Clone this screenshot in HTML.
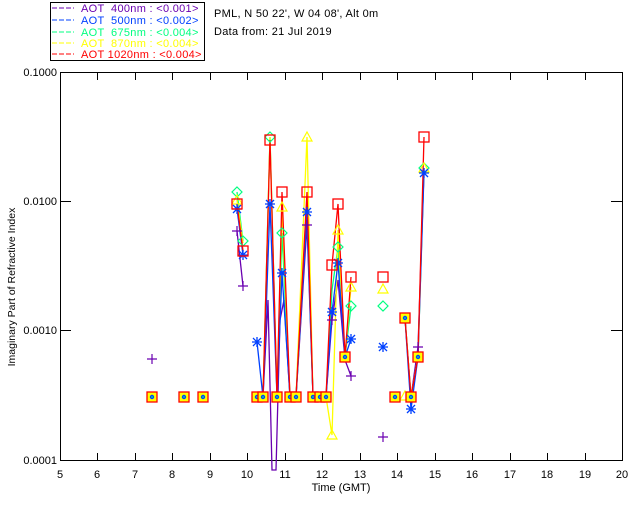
<!DOCTYPE html>
<html><head><meta charset="utf-8"><style>
html,body{margin:0;padding:0;background:#fff;}
svg{display:block;font-family:"Liberation Sans",sans-serif;}
</style></head><body>
<svg width="640" height="512" viewBox="0 0 640 512" xmlns="http://www.w3.org/2000/svg">
<defs>
<g id="sq"><rect x="-5" y="-5" width="10" height="10" fill="none" stroke="#f00" stroke-width="1.3"/></g>
<g id="sqf"><rect x="-5" y="-5" width="10" height="10" fill="#ff0" stroke="#f00" stroke-width="1.3"/><circle r="2.2" fill="#0040ff"/><circle r="0.9" fill="#00ff80"/></g>
<g id="tr"><path d="M0,-5 L5,4 L-5,4 Z" fill="none" stroke="#ff0" stroke-width="1.2"/></g>
<g id="di"><path d="M0,-5 L5,0 L0,5 L-5,0 Z" fill="none" stroke="#00ff80" stroke-width="1.2"/></g>
<g id="as" stroke="#0040ff" stroke-width="1.3"><path d="M-5,0H5M0,-5V5M-4,-4L4,4M-4,4L4,-4"/></g>
<g id="pl" stroke="#6a00b0" stroke-width="1.2"><path d="M-5,0H5M0,-5V5"/></g>
</defs>
<rect x="50.5" y="2.5" width="154" height="58" fill="#fff" stroke="#000" stroke-width="1"/>
<g font-size="11" letter-spacing="0.3">
<line x1="52" y1="8" x2="74" y2="8" stroke="#6a00b0" stroke-dasharray="5,2"/>
<text x="81" y="12" fill="#6a00b0" xml:space="preserve">AOT  400nm : &lt;0.001&gt;</text>
<line x1="52" y1="20" x2="74" y2="20" stroke="#0040ff" stroke-dasharray="5,2"/>
<text x="81" y="24" fill="#0040ff" xml:space="preserve">AOT  500nm : &lt;0.002&gt;</text>
<line x1="52" y1="32" x2="74" y2="32" stroke="#00ff80" stroke-dasharray="5,2"/>
<text x="81" y="36" fill="#00ff80" xml:space="preserve">AOT  675nm : &lt;0.004&gt;</text>
<line x1="52" y1="43" x2="74" y2="43" stroke="#ff0" stroke-dasharray="5,2"/>
<text x="81" y="47" fill="#ff0" xml:space="preserve">AOT  870nm : &lt;0.004&gt;</text>
<line x1="52" y1="54" x2="74" y2="54" stroke="#f00" stroke-dasharray="5,2"/>
<text x="81" y="58" fill="#f00" xml:space="preserve">AOT 1020nm : &lt;0.004&gt;</text>
<text x="214" y="17" fill="#000">PML, N 50 22', W 04 08', Alt 0m</text>
<text x="214" y="35" fill="#000">Data from: 21 Jul 2019</text>
</g>
<rect x="60.5" y="72.5" width="562" height="388" fill="none" stroke="#000" stroke-width="1"/>
<g stroke="#000" stroke-width="1">
<path d="M97.5,461V453M135.5,461V453M172.5,461V453M210.5,461V453M247.5,461V453M285.5,461V453M322.5,461V453M360.5,461V453M397.5,461V453M435.5,461V453M472.5,461V453M510.5,461V453M547.5,461V453M585.5,461V453"/>
<path d="M97.5,72V80M135.5,72V80M172.5,72V80M210.5,72V80M247.5,72V80M285.5,72V80M322.5,72V80M360.5,72V80M397.5,72V80M435.5,72V80M472.5,72V80M510.5,72V80M547.5,72V80M585.5,72V80"/>
<path d="M60,201.5H71M60,330.5H71M622,201.5H611M622,330.5H611"/>
</g>
<g font-size="11" fill="#000">
<text x="57" y="76" text-anchor="end">0.1000</text>
<text x="57" y="205" text-anchor="end">0.0100</text>
<text x="57" y="334" text-anchor="end">0.0010</text>
<text x="57" y="464" text-anchor="end">0.0001</text>
<g text-anchor="middle">
<text x="60" y="478">5</text><text x="97" y="478">6</text><text x="135" y="478">7</text><text x="172" y="478">8</text><text x="210" y="478">9</text><text x="247" y="478">10</text><text x="285" y="478">11</text><text x="322" y="478">12</text><text x="360" y="478">13</text><text x="397" y="478">14</text><text x="435" y="478">15</text><text x="472" y="478">16</text><text x="510" y="478">17</text><text x="547" y="478">18</text><text x="585" y="478">19</text><text x="622" y="478">20</text>
<text x="341" y="491">Time (GMT)</text>
</g>
<text transform="translate(15,287) rotate(-90)" text-anchor="middle" font-size="10.5">Imaginary Part of Refractive Index</text>
</g>
<g fill="none" stroke-width="1.3">
<g stroke="#6a00b0">
<polyline points="237,231 243,286"/>
<polyline points="257,397 263,397 268,300 272,470 276,470 280,320 284,300 290,397 296,397 307,225 313,397 320,397 326,397 332,320 338,280 345,360 351,376"/>
<polyline points="405,318 411,397 418,347 424,170"/>
</g>
<g stroke="#00ff80">
<polyline points="237,192 243,241"/>
<polyline points="257,397 263,397 270,137 277,397 282,233 290,397 296,397 307,210 313,397 320,397 326,397 332,290 338,247 345,357 351,306"/>
<polyline points="405,318 411,397 418,357 424,168"/>
</g>
<g stroke="#ff0">
<polyline points="237,200 243,243"/>
<polyline points="257,397 263,397 270,137 277,397 282,207 290,397 296,397 307,137 313,397 320,397 326,397 332,435 338,230 345,357 351,287"/>
<polyline points="405,318 411,397 418,357 424,168"/>
</g>
<g stroke="#0040ff">
<polyline points="237,209 243,255"/>
<polyline points="257,342 263,397 270,204 277,397 282,273 290,397 296,397 307,212 313,397 320,397 326,397 332,312 338,263 345,357 351,339"/>
<polyline points="405,318 411,409 418,357 424,173"/>
</g>
<g stroke="#f00">
<polyline points="237,204 243,251"/>
<polyline points="257,397 263,397 270,140 277,397 282,192 290,397 296,397 307,192 313,397 320,397 326,397 332,265 338,204 345,357 351,277"/>
<polyline points="405,318 411,397 418,357 424,137"/>
</g>
</g>
<use href="#pl" x="152" y="359"/><use href="#pl" x="237" y="231"/><use href="#pl" x="243" y="286"/><use href="#pl" x="307" y="225"/><use href="#pl" x="351" y="376"/><use href="#pl" x="383" y="437"/><use href="#pl" x="418" y="347"/><use href="#pl" x="332" y="320"/>
<use href="#di" x="237" y="192"/><use href="#di" x="243" y="241"/><use href="#di" x="270" y="137"/><use href="#di" x="282" y="233"/><use href="#di" x="338" y="247"/><use href="#di" x="351" y="306"/><use href="#di" x="383" y="306"/><use href="#di" x="424" y="168"/>
<use href="#tr" x="307" y="137"/><use href="#tr" x="332" y="435"/><use href="#tr" x="282" y="207"/><use href="#tr" x="338" y="230"/><use href="#tr" x="351" y="287"/><use href="#tr" x="383" y="289"/><use href="#tr" x="405" y="396"/><use href="#tr" x="424" y="168"/><use href="#tr" x="237" y="200"/>
<use href="#as" x="237" y="209"/><use href="#as" x="243" y="255"/><use href="#as" x="257" y="342"/><use href="#as" x="270" y="204"/><use href="#as" x="282" y="273"/><use href="#as" x="307" y="212"/><use href="#as" x="332" y="312"/><use href="#as" x="338" y="263"/><use href="#as" x="351" y="339"/><use href="#as" x="383" y="347"/><use href="#as" x="411" y="409"/><use href="#as" x="424" y="173"/>
<use href="#sq" x="237" y="204"/><use href="#sq" x="243" y="251"/><use href="#sq" x="270" y="140"/><use href="#sq" x="282" y="192"/><use href="#sq" x="307" y="192"/><use href="#sq" x="332" y="265"/><use href="#sq" x="338" y="204"/><use href="#sq" x="351" y="277"/><use href="#sq" x="383" y="277"/><use href="#sq" x="424" y="137"/>
<use href="#sqf" x="152" y="397"/><use href="#sqf" x="184" y="397"/><use href="#sqf" x="203" y="397"/><use href="#sqf" x="257" y="397"/><use href="#sqf" x="263" y="397"/><use href="#sqf" x="277" y="397"/><use href="#sqf" x="290" y="397"/><use href="#sqf" x="296" y="397"/><use href="#sqf" x="313" y="397"/><use href="#sqf" x="320" y="397"/><use href="#sqf" x="326" y="397"/><use href="#sqf" x="345" y="357"/><use href="#sqf" x="395" y="397"/><use href="#sqf" x="405" y="318"/><use href="#sqf" x="411" y="397"/><use href="#sqf" x="418" y="357"/>
</svg>
</body></html>
